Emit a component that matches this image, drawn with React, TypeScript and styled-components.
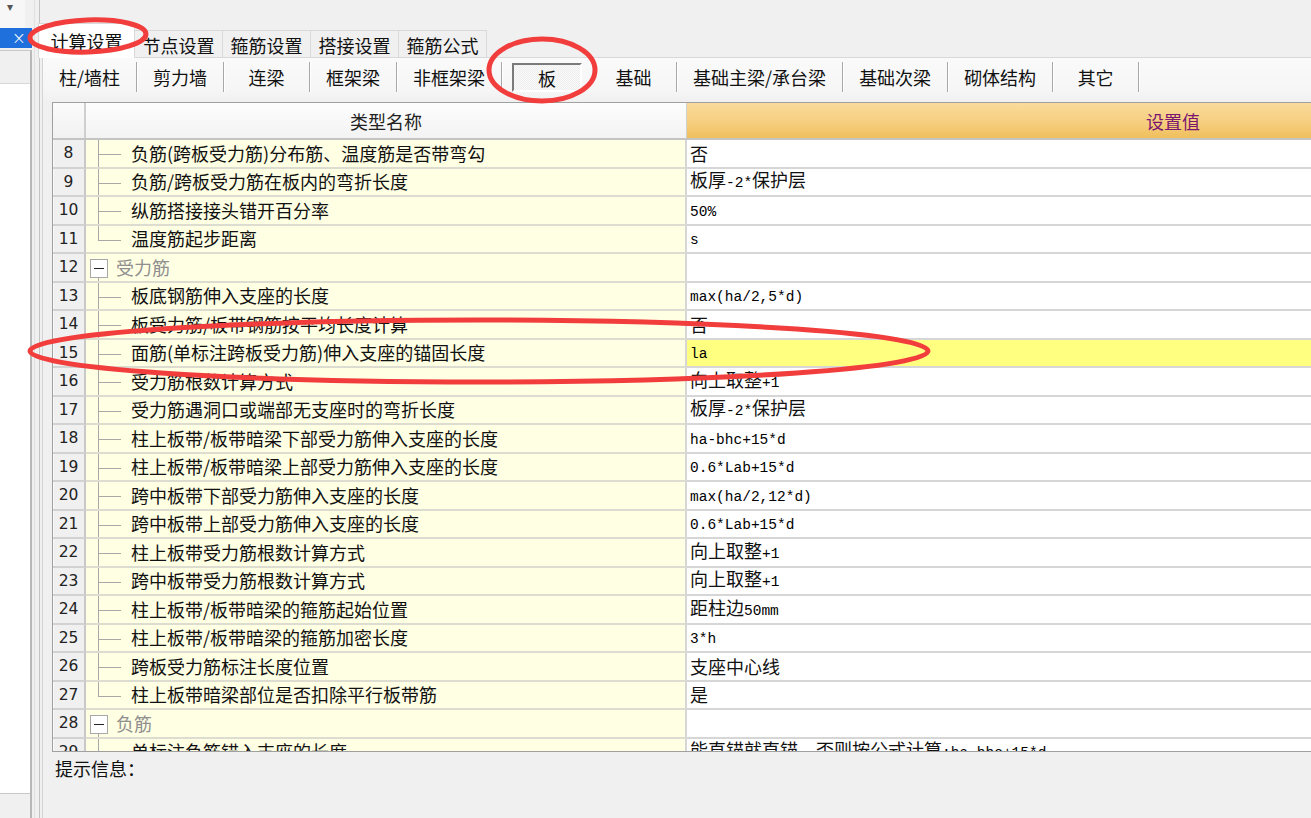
import styled, { createGlobalStyle } from 'styled-components'

const GlobalStyle = createGlobalStyle`
  html, body {
    margin: 0;
    padding: 0;
    background: #f0f0f0;
  }
  body {
    font-family: 'Noto Sans CJK SC', 'Noto Sans', sans-serif;
    color: #111;
  }
`

type RowKind = 'item' | 'last' | 'group'

interface RowData {
  n: number
  name: string
  value?: string
  kind: RowKind
  highlight?: boolean
}

const tabs = ['计算设置', '节点设置', '箍筋设置', '搭接设置', '箍筋公式']

const subTabs = [
  '柱/墙柱',
  '剪力墙',
  '连梁',
  '框架梁',
  '非框架梁',
  '板',
  '基础',
  '基础主梁/承台梁',
  '基础次梁',
  '砌体结构',
  '其它'
]

const rows: RowData[] = [
  { n: 8, name: '负筋(跨板受力筋)分布筋、温度筋是否带弯勾', value: '否', kind: 'item' },
  { n: 9, name: '负筋/跨板受力筋在板内的弯折长度', value: '板厚-2*保护层', kind: 'item' },
  { n: 10, name: '纵筋搭接接头错开百分率', value: '50%', kind: 'item' },
  { n: 11, name: '温度筋起步距离', value: 's', kind: 'last' },
  { n: 12, name: '受力筋', kind: 'group' },
  { n: 13, name: '板底钢筋伸入支座的长度', value: 'max(ha/2,5*d)', kind: 'item' },
  { n: 14, name: '板受力筋/板带钢筋按平均长度计算', value: '否', kind: 'item' },
  { n: 15, name: '面筋(单标注跨板受力筋)伸入支座的锚固长度', value: 'la', kind: 'item', highlight: true },
  { n: 16, name: '受力筋根数计算方式', value: '向上取整+1', kind: 'item' },
  { n: 17, name: '受力筋遇洞口或端部无支座时的弯折长度', value: '板厚-2*保护层', kind: 'item' },
  { n: 18, name: '柱上板带/板带暗梁下部受力筋伸入支座的长度', value: 'ha-bhc+15*d', kind: 'item' },
  { n: 19, name: '柱上板带/板带暗梁上部受力筋伸入支座的长度', value: '0.6*Lab+15*d', kind: 'item' },
  { n: 20, name: '跨中板带下部受力筋伸入支座的长度', value: 'max(ha/2,12*d)', kind: 'item' },
  { n: 21, name: '跨中板带上部受力筋伸入支座的长度', value: '0.6*Lab+15*d', kind: 'item' },
  { n: 22, name: '柱上板带受力筋根数计算方式', value: '向上取整+1', kind: 'item' },
  { n: 23, name: '跨中板带受力筋根数计算方式', value: '向上取整+1', kind: 'item' },
  { n: 24, name: '柱上板带/板带暗梁的箍筋起始位置', value: '距柱边50mm', kind: 'item' },
  { n: 25, name: '柱上板带/板带暗梁的箍筋加密长度', value: '3*h', kind: 'item' },
  { n: 26, name: '跨板受力筋标注长度位置', value: '支座中心线', kind: 'item' },
  { n: 27, name: '柱上板带暗梁部位是否扣除平行板带筋', value: '是', kind: 'last' },
  { n: 28, name: '负筋', kind: 'group' },
  { n: 29, name: '单标注负筋锚入支座的长度', value: '能直锚就直锚，否则按公式计算:ha-bhc+15*d', kind: 'item' }
]

const ROW_H = 28.5

const TreeMark = ({ kind }: { kind: RowKind }) => {
  const mid = 14
  if (kind === 'group') {
    return (
      <svg width="30" height={ROW_H} shapeRendering="crispEdges">
        <rect x="4.5" y="5.5" width="17" height="18" fill="#fff" stroke="#a8a8a8" />
        <line x1="8" y1="14.5" x2="18" y2="14.5" stroke="#222" strokeWidth="1.5" />
        <line x1="12.5" y1="24" x2="12.5" y2={ROW_H} stroke="#a8a8a8" />
      </svg>
    )
  }
  return (
    <svg width="45" height={ROW_H} shapeRendering="crispEdges">
      <line x1="12.5" y1="0" x2="12.5" y2={kind === 'last' ? mid + 0.5 : ROW_H} stroke="#a8a8a8" />
      <line x1="12.5" y1={mid + 0.5} x2="35" y2={mid + 0.5} stroke="#a8a8a8" />
    </svg>
  )
}

// ascii runs use the narrow mono face, the rest stays CJK
const Mixed = ({ text }: { text: string }) => (
  <ValueText>
    {text
      .split(/([\x20-\x7e]+)/)
      .filter(Boolean)
      .map((part, i) =>
        /^[\x20-\x7e]+$/.test(part) ? <Ascii key={i}>{part}</Ascii> : <span key={i}>{part}</span>
      )}
  </ValueText>
)

const App = () => {
  return (
    <Root>
      <GlobalStyle />
      <LeftStrip>
        <LeftPanel>
          <DropTop>
            <Caret>▾</Caret>
          </DropTop>
          <TitleBar>
            <CloseMark>×</CloseMark>
          </TitleBar>
          <PanelFrame>
            <PanelWhite />
          </PanelFrame>
        </LeftPanel>
        <Splitter />
      </LeftStrip>

      <Main>
        <TabStrip>
          {tabs.map((t, i) => (
            <Tab key={t} $active={i === 0}>
              {t}
            </Tab>
          ))}
        </TabStrip>

        <Body>
          <SubTabBar>
            {subTabs.map((t) =>
              t === '板' ? (
                <PressedSlot key={t}>
                  <PressedButton>{t}</PressedButton>
                </PressedSlot>
              ) : (
                <SubTab key={t}>{t}</SubTab>
              )
            )}
          </SubTabBar>

          <Grid>
            <HeaderRow>
              <HeadNum />
              <HeadName>类型名称</HeadName>
              <HeadValue>设置值</HeadValue>
            </HeaderRow>
            {rows.map((r) => (
              <Row key={r.n}>
                <NumCell>{r.n}</NumCell>
                <NameCell>
                  <TreeMark kind={r.kind} />
                  <NameText $group={r.kind === 'group'}>{r.name}</NameText>
                </NameCell>
                <ValueCell $highlight={r.highlight}>{r.value && <Mixed text={r.value} />}</ValueCell>
              </Row>
            ))}
          </Grid>

          <HintBar>提示信息：</HintBar>
        </Body>
      </Main>

      <Marks width="1311" height="818" viewBox="0 0 1311 818">
        <ellipse cx="88" cy="36" rx="58" ry="16" transform="rotate(-2 88 36)" />
        <ellipse cx="542" cy="70" rx="53" ry="31" />
        <ellipse cx="479" cy="351" rx="449" ry="31" />
      </Marks>
    </Root>
  )
}

const Root = styled.div`
  position: relative;
  width: 1311px;
  height: 818px;
  overflow: hidden;
  display: flex;
  background: #f0f0f0;
`

const LeftStrip = styled.div`
  width: 40px;
  flex: none;
  display: flex;
`

const LeftPanel = styled.div`
  width: 32px;
  display: flex;
  flex-direction: column;
`

const DropTop = styled.div`
  height: 28px;
  width: 25px;
  background: #f7f7f7;
  position: relative;
`

const Caret = styled.span`
  position: absolute;
  left: 7px;
  top: 1px;
  font-size: 12px;
  line-height: 1;
  color: #555;
  font-family: 'DejaVu Sans', sans-serif;
`

const TitleBar = styled.div`
  height: 20px;
  background: #1f6fdc;
  display: flex;
  align-items: center;
  justify-content: flex-end;
  padding-right: 6px;
`

const CloseMark = styled.span`
  color: #fff;
  font-family: 'DejaVu Sans', sans-serif;
  font-size: 17px;
  line-height: 1;
  font-weight: 300;
`

const PanelFrame = styled.div`
  flex: 1;
  margin-top: 2px;
  border-top: 1px solid #c8c8c8;
  border-right: 2px solid #b8b8b8;
  padding-top: 32px;
  padding-bottom: 24px;
  display: flex;
  flex-direction: column;
`

const PanelWhite = styled.div`
  flex: 1;
  background: #fff;
  border-top: 1px solid #d8d8d8;
  border-bottom: 1px solid #c8c8c8;
`

const Splitter = styled.div`
  flex: 1;
  border-right: 1px solid #c4c4c4;
  box-shadow: inset -4px 0 0 #f0f0f0, inset -5px 0 0 #e0e0e0;
`

const Main = styled.div`
  flex: 1;
  display: flex;
  flex-direction: column;
  min-width: 0;
  padding-top: 22px;
`

const TabStrip = styled.div`
  height: 35px;
  display: flex;
  align-items: flex-end;
  position: relative;
  z-index: 1;
`

const Tab = styled.div<{ $active?: boolean }>`
  box-sizing: border-box;
  height: ${(p) => (p.$active ? 35 : 27)}px;
  width: ${(p) => (p.$active ? 97 : 88)}px;
  margin-left: ${(p) => (p.$active ? -2 : 0)}px;
  margin-bottom: ${(p) => (p.$active ? -1 : 0)}px;
  display: flex;
  align-items: center;
  justify-content: center;
  font-size: 18px;
  line-height: 1;
  padding-top: ${(p) => (p.$active ? 0 : 1)}px;
  background: ${(p) => (p.$active ? '#ffffff' : '#f0f0f0')};
  border: 1px solid #d9d9d9;
  border-left: ${(p) => (p.$active ? '1px solid #d9d9d9' : 'none')};
  border-bottom: none;
  color: #111;
`

const Body = styled.div`
  flex: 1;
  margin-left: 2px;
  border-top: 1px solid #d9d9d9;
  border-left: 1px solid #d4d4d4;
  display: flex;
  flex-direction: column;
  background: #f0f0f0;
`

const SubTabBar = styled.div`
  display: flex;
  align-items: stretch;
  height: 30px;
  padding-top: 4px;
  padding-bottom: 10px;
  background: linear-gradient(#fafafa, #f6f6f6 70%, #f0f0f0);
`

const SubTab = styled.div`
  box-sizing: border-box;
  min-width: 86px;
  padding: 0 16px 1px;
  display: flex;
  align-items: center;
  justify-content: center;
  font-size: 18px;
  line-height: 1;
  color: #111;
  border-right: 1px solid #a8a8a8;
  box-shadow: 1px 0 0 #ffffff;
`

const PressedSlot = styled.div`
  width: 89px;
  box-sizing: border-box;
  padding: 1px 9px 0 10px;
  display: flex;
`

const PressedButton = styled.div`
  flex: 1;
  display: flex;
  align-items: center;
  justify-content: center;
  font-size: 18px;
  line-height: 1;
  color: #111;
  border: 2px solid;
  border-color: #7a7a7a #ffffff #ffffff #7a7a7a;
  background-color: #f4f4f4;
  background-image: repeating-conic-gradient(#ededed 0 25%, #fbfbfb 0 50%);
  background-size: 2px 2px;
`

const Grid = styled.div`
  margin-left: 9px;
  height: 650px;
  width: 1610px;
  box-sizing: border-box;
  border: 1px solid #a0a0a0;
  border-right: none;
  overflow: hidden;
  background: #fff;
  flex: none;
`

const HeaderRow = styled.div`
  display: flex;
  height: 37px;
  border-bottom: 2px solid #c4c4c4;
  box-sizing: border-box;
`

const HeadNum = styled.div`
  width: 33px;
  flex: none;
  box-sizing: border-box;
  background: linear-gradient(#fbfbfb, #f1f1f1);
  border-right: 2px solid #cfcfcf;
`

const HeadName = styled.div`
  width: 601px;
  flex: none;
  box-sizing: border-box;
  display: flex;
  align-items: center;
  justify-content: center;
  font-size: 18px;
  color: #222;
  background: linear-gradient(#fdfdfd, #f3f3f3);
  border-right: 1px solid #d0d0d0;
`

const HeadValue = styled.div`
  width: 972px;
  flex: none;
  display: flex;
  align-items: center;
  justify-content: center;
  font-size: 18px;
  color: #7a1670;
  background: linear-gradient(#fadb9c, #f5cd7c 60%, #efbf5c);
`

const Row = styled.div`
  display: flex;
  height: ${ROW_H}px;
`

const NumCell = styled.div`
  width: 33px;
  flex: none;
  box-sizing: border-box;
  display: flex;
  align-items: center;
  justify-content: center;
  font-family: 'DejaVu Sans', sans-serif;
  font-size: 15.5px;
  color: #222;
  background: #f0f0f0;
  border-right: 2px solid #c8c8c8;
  border-bottom: 2px solid #d2d2d2;
  box-shadow: inset 1px 0 0 #fafafa;
`

const NameCell = styled.div`
  width: 601px;
  flex: none;
  box-sizing: border-box;
  display: flex;
  align-items: stretch;
  background: #ffffe3;
  border-right: 2px solid #d6d6d6;
  border-bottom: 2px solid #dcdcd0;
  overflow: hidden;
  white-space: nowrap;

  svg {
    flex: none;
    margin-bottom: -2px;
  }
`

const NameText = styled.span<{ $group?: boolean }>`
  display: flex;
  align-items: center;
  font-size: 18px;
  line-height: 1;
  color: ${(p) => (p.$group ? '#8f8f8f' : '#111')};
  padding-bottom: 1px;
`

const ValueCell = styled.div<{ $highlight?: boolean }>`
  width: 972px;
  flex: none;
  box-sizing: border-box;
  display: flex;
  align-items: center;
  padding-left: 3px;
  white-space: nowrap;
  color: #111;
  background: ${(p) => (p.$highlight ? '#ffff80' : '#ffffff')};
  border-bottom: 2px solid #d6d6d6;
`

const ValueText = styled.span`
  font-size: 18px;
  line-height: 20px;
  padding-bottom: 1px;
`

const Ascii = styled.span`
  font-family: 'Liberation Mono', 'DejaVu Sans Mono', monospace;
  font-size: 14.5px;
  color: #000;
`

const HintBar = styled.div`
  flex: 1;
  padding: 5px 0 0 12px;
  font-size: 18px;
  line-height: 22px;
  color: #111;
`

const Marks = styled.svg`
  position: absolute;
  left: 0;
  top: 0;
  pointer-events: none;
  z-index: 5;

  ellipse {
    fill: none;
    stroke: #f23d3d;
    stroke-width: 5;
  }
`

export default App
